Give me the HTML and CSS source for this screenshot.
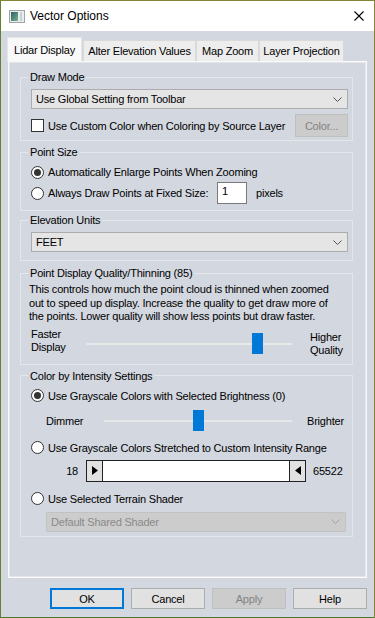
FILE: index.html
```html
<!DOCTYPE html>
<html lang="en">
<head>
    <meta charset="UTF-8">
    <meta name="viewport" content="width=device-width, initial-scale=1.0">
    <title>Vector Options</title>
    <link rel="stylesheet" href="styles.css">
</head>
<body>
<div class="window">
    <!-- title bar -->
    <div class="titlebar">
        <svg class="app-icon" width="16" height="13" viewBox="0 0 16 13">
            <defs>
                <linearGradient id="ig" x1="0" y1="0" x2="1" y2="1">
                    <stop offset="0" stop-color="#2d5f6a"/>
                    <stop offset="1" stop-color="#79b48c"/>
                </linearGradient>
            </defs>
            <rect x="0.5" y="0.5" width="15" height="12" fill="#ececec" stroke="#a3a3a3"/>
            <rect x="2" y="2" width="7" height="9" fill="url(#ig)"/>
            <rect x="11" y="2" width="2" height="9" fill="#bfd3dc"/>
        </svg>
        <span class="title">Vector Options</span>
        <svg class="close" width="10" height="10" viewBox="0 0 10 10">
            <path d="M0.5 0.5 L9.5 9.5 M9.5 0.5 L0.5 9.5" stroke="#000" stroke-width="1.1" fill="none"/>
        </svg>
    </div>

    <!-- tabs -->
    <div class="tabs">
        <div class="tab active">Lidar Display</div>
        <div class="tab t-alter">Alter Elevation Values</div>
        <div class="tab t-zoom">Map Zoom</div>
        <div class="tab t-proj">Layer Projection</div>
    </div>

    <div class="panel">
        <fieldset class="group g-draw">
            <legend>Draw Mode</legend>
            <div class="select">
                <span>Use Global Setting from Toolbar</span>
                <svg class="chev" width="9" height="5" viewBox="0 0 9 5"><path d="M0.5 0.5 L4.5 4.5 L8.5 0.5" stroke="#555" fill="none"/></svg>
            </div>
            <div class="check-row">
                <span class="checkbox"></span>
                <span class="label">Use Custom Color when Coloring by Source Layer</span>
                <span class="btn small disabled">Color...</span>
            </div>
        </fieldset>

        <fieldset class="group g-size">
            <legend>Point Size</legend>
            <div class="radio-row">
                <span class="radio checked"></span>
                <span class="label">Automatically Enlarge Points When Zooming</span>
            </div>
            <div class="radio-row fixed-row">
                <span class="radio"></span>
                <span class="label fixed-label">Always Draw Points at Fixed Size:</span>
                <span class="textbox">1</span>
                <span class="unit">pixels</span>
            </div>
        </fieldset>

        <fieldset class="group g-units">
            <legend>Elevation Units</legend>
            <div class="select">
                <span>FEET</span>
                <svg class="chev" width="9" height="5" viewBox="0 0 9 5"><path d="M0.5 0.5 L4.5 4.5 L8.5 0.5" stroke="#555" fill="none"/></svg>
            </div>
        </fieldset>

        <fieldset class="group g-quality">
            <legend>Point Display Quality/Thinning (85)</legend>
            <p class="note">This controls how much the point cloud is thinned when zoomed<br>out to speed up display. Increase the quality to get draw more of<br>the points. Lower quality will show less points but draw faster.</p>
            <div class="slider-row quality-row">
                <span class="slabel left">Faster<br>Display</span>
                <div class="track quality-track">
                    <span class="thumb" style="left: 166px"></span>
                </div>
                <span class="slabel right">Higher<br>Quality</span>
            </div>
        </fieldset>

        <fieldset class="group g-intensity">
            <legend>Color by Intensity Settings</legend>
            <div class="radio-row">
                <span class="radio checked"></span>
                <span class="label">Use Grayscale Colors with Selected Brightness (0)</span>
            </div>
            <div class="slider-row bright-row">
                <span class="dim">Dimmer</span>
                <div class="track bright-track">
                    <span class="thumb" style="left: 89px"></span>
                </div>
                <span class="bright">Brighter</span>
            </div>
            <div class="radio-row r-stretch">
                <span class="radio"></span>
                <span class="label">Use Grayscale Colors Stretched to Custom Intensity Range</span>
            </div>
            <div class="range-row">
                <span class="range-min">18</span>
                <div class="range">
                    <span class="range-btn lo"><svg width="6" height="9" viewBox="0 0 6 9"><path d="M0 0 L6 4.5 L0 9 Z" fill="#000"/></svg></span>
                    <span class="range-fill"></span>
                    <span class="range-btn hi"><svg width="6" height="9" viewBox="0 0 6 9"><path d="M6 0 L0 4.5 L6 9 Z" fill="#000"/></svg></span>
                </div>
                <span class="range-max">65522</span>
            </div>
            <div class="radio-row r-shader">
                <span class="radio"></span>
                <span class="label">Use Selected Terrain Shader</span>
            </div>
            <div class="select disabled shader">
                <span>Default Shared Shader</span>
                <svg class="chev" width="9" height="5" viewBox="0 0 9 5"><path d="M0.5 0.5 L4.5 4.5 L8.5 0.5" stroke="#a0a0a0" fill="none"/></svg>
            </div>
        </fieldset>
    </div>

    <!-- dialog buttons -->
    <div class="buttons">
        <span class="btn default">OK</span>
        <span class="btn">Cancel</span>
        <span class="btn disabled">Apply</span>
        <span class="btn">Help</span>
    </div>
</div>
</body>
</html>
```

FILE: styles.css
```css
* {
    box-sizing: border-box;
}

body {
    margin: 0;
    font-family: "Liberation Sans", Arial, sans-serif;
    font-size: 11px;
    color: #000;
}

.window {
    width: 375px;
    height: 618px;
    border: 1px solid;
    border-color: #85853a #85853a #467b2b #647f33;
    background: #d3d7df;
    letter-spacing: -0.2px;
}

/* title bar */
.titlebar {
    height: 30px;
    background: #fff;
    display: flex;
    align-items: center;
}

.app-icon {
    margin-left: 8px;
}

.title {
    margin-left: 5px;
    font-size: 12px;
    letter-spacing: 0;
}

.close {
    margin-left: auto;
    margin-right: 10px;
}

/* tabs */
.tabs {
    display: flex;
    align-items: flex-end;
    height: 25px;
    margin-top: 6px;
    margin-bottom: -1px;
    padding-left: 6px;
    position: relative;
    z-index: 1;
}

.tab {
    height: 21px;
    margin-bottom: 1px;
    border: 1px solid #d9d9d9;
    border-bottom: none;
    background: #ededed;
    display: flex;
    align-items: center;
    justify-content: center;
}

.tab.active {
    width: 75px;
    height: 25px;
    margin-bottom: 0;
    background: #f9f9f9;
    border-color: #e6e6e6;
    padding-bottom: 1px;
}

.t-alter { width: 113px; margin-left: 1px; }
.t-zoom { width: 63px; }
.t-proj { width: 85px; }

/* tab page */
.panel {
    margin: 0 7px;
    height: 517px;
    border: 1px solid #fafafa;
    box-shadow: inset 0 0 0 1px #e4e6eb;
    padding: 8px 0 0 11px;
}

.group {
    width: 333px;
    margin: 0;
    min-width: 0;
    border: 1px solid #e3e6eb;
    padding: 0 4px 0 10px;
}

.group legend {
    padding: 0 2px;
    margin-left: -3px;
    line-height: 14px;
}

.g-draw { padding-top: 5px; padding-bottom: 3px; }
.g-size { margin-top: 4px; padding-top: 6px; padding-bottom: 6px; }
.g-units { margin-top: 2px; padding-top: 5px; padding-bottom: 8px; }
.g-quality { margin-top: 5px; padding-top: 3px; padding-bottom: 8px; }
.g-intensity { margin-top: 4px; padding-top: 6px; padding-bottom: 4px; }

/* combo box */
.select {
    height: 20px;
    border: 1px solid #acacac;
    background: #e5e5e5;
    display: flex;
    align-items: center;
    padding-left: 4px;
}

.select .chev {
    margin-left: auto;
    margin-right: 5px;
}

.select.disabled {
    background: #cccccc;
    border-color: #c2c2c2;
    color: #8a8a8a;
}

.shader {
    margin-top: 6px;
    margin-left: 15px;
    width: 300px;
}

/* check box / radio rows */
.check-row {
    display: flex;
    align-items: center;
    height: 23px;
    margin-top: 5px;
}

.checkbox {
    width: 13px;
    height: 13px;
    border: 1px solid #333;
    background: #fff;
}

.label {
    margin-left: 4px;
}

.radio-row {
    display: flex;
    align-items: center;
    height: 14px;
}

.radio {
    width: 13px;
    height: 13px;
    border: 1px solid #333;
    border-radius: 50%;
    background: #fff;
    display: flex;
    align-items: center;
    justify-content: center;
}

.radio.checked::after {
    content: "";
    width: 7px;
    height: 7px;
    border-radius: 50%;
    background: #333;
}

.fixed-row {
    height: 22px;
    margin-top: 3px;
}

.fixed-label {
    width: 169px;
}

.textbox {
    width: 30px;
    height: 22px;
    border: 1px solid #7a7a7a;
    background: #fff;
    padding: 2px 0 0 4px;
}

.unit {
    margin-left: 9px;
}

/* buttons */
.btn {
    width: 74px;
    height: 21px;
    border: 1px solid #adadad;
    background: #e1e1e1;
    display: flex;
    align-items: center;
    justify-content: center;
}

.btn.small {
    width: 53px;
    height: 23px;
    margin-left: auto;
}

.btn.disabled {
    background: #cccccc;
    border-color: #bfbfbf;
    color: #838383;
}

.btn.default {
    border: 2px solid #0078d7;
}

.buttons {
    display: flex;
    justify-content: flex-end;
    gap: 7px;
    margin-top: 10px;
    padding-right: 7px;
}

/* quality text + sliders */
.note {
    margin: 0 0 0 -2px;
    line-height: 13.5px;
}

.slider-row {
    display: flex;
}

.quality-row {
    height: 28px;
    margin-top: 4px;
}

.slabel {
    line-height: 13px;
}

.slabel.left {
    width: 55px;
}

.slabel.right {
    margin-left: 18px;
    padding-top: 3px;
}

.track {
    position: relative;
    height: 2px;
    background: #e8e8e8;
}

.quality-track {
    width: 206px;
    margin-top: 15px;
}

.thumb {
    position: absolute;
    top: -10px;
    width: 11px;
    height: 21px;
    background: #0078d7;
}

.bright-row {
    height: 21px;
    margin-top: 8px;
    margin-left: 15px;
    align-items: center;
}

.dim {
    width: 58px;
}

.bright-track {
    width: 188px;
}

.bright {
    margin-left: 15px;
}

.r-stretch {
    margin-top: 9px;
}

/* intensity range */
.range-row {
    display: flex;
    align-items: center;
    height: 22px;
    margin-top: 5px;
    margin-left: 15px;
}

.range-min {
    width: 32px;
    text-align: right;
}

.range {
    display: flex;
    width: 220px;
    height: 22px;
    margin-left: 8px;
    border: 1px solid #222;
    background: #fff;
}

.range-btn {
    width: 16px;
    background: #e1e1e1;
    display: flex;
    align-items: center;
    justify-content: center;
}

.range-btn.lo {
    border-right: 1px solid #222;
}

.range-btn.hi {
    border-left: 1px solid #222;
}

.range-fill {
    flex: 1;
}

.range-max {
    margin-left: 7px;
}

.r-shader {
    margin-top: 10px;
}
```
